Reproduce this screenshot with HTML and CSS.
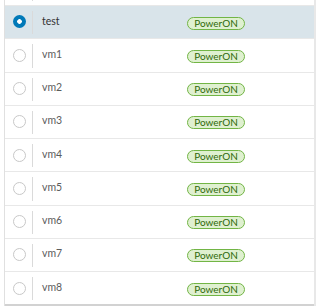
FILE: index.html
```html
<!DOCTYPE html>
<html lang="en">
  <head>
    <meta charset="UTF-8" />
    <meta name="viewport" content="width=device-width, initial-scale=1.0" />
    <title>VM list</title>
    <link rel="stylesheet" href="styles.css">
  </head>
  <body>
    <div class="grid">
      <div class="row row-prev">
        <div class="cell cell-select"></div>
        <div class="cell cell-name"></div>
        <div class="cell cell-status"></div>
      </div>
      <div class="row selected">
        <div class="cell cell-select"><span class="radio checked"></span></div>
        <div class="cell cell-name">test</div>
        <div class="cell cell-status"><span class="badge">PowerON</span></div>
      </div>
      <div class="row">
        <div class="cell cell-select"><span class="radio"></span></div>
        <div class="cell cell-name">vm1</div>
        <div class="cell cell-status"><span class="badge">PowerON</span></div>
      </div>
      <div class="row">
        <div class="cell cell-select"><span class="radio"></span></div>
        <div class="cell cell-name">vm2</div>
        <div class="cell cell-status"><span class="badge">PowerON</span></div>
      </div>
      <div class="row">
        <div class="cell cell-select"><span class="radio"></span></div>
        <div class="cell cell-name">vm3</div>
        <div class="cell cell-status"><span class="badge">PowerON</span></div>
      </div>
      <div class="row">
        <div class="cell cell-select"><span class="radio"></span></div>
        <div class="cell cell-name">vm4</div>
        <div class="cell cell-status"><span class="badge">PowerON</span></div>
      </div>
      <div class="row">
        <div class="cell cell-select"><span class="radio"></span></div>
        <div class="cell cell-name">vm5</div>
        <div class="cell cell-status"><span class="badge">PowerON</span></div>
      </div>
      <div class="row">
        <div class="cell cell-select"><span class="radio"></span></div>
        <div class="cell cell-name">vm6</div>
        <div class="cell cell-status"><span class="badge">PowerON</span></div>
      </div>
      <div class="row">
        <div class="cell cell-select"><span class="radio"></span></div>
        <div class="cell cell-name">vm7</div>
        <div class="cell cell-status"><span class="badge">PowerON</span></div>
      </div>
      <div class="row">
        <div class="cell cell-select"><span class="radio"></span></div>
        <div class="cell cell-name">vm8</div>
        <div class="cell cell-status"><span class="badge">PowerON</span></div>
      </div>
      <div class="grid-footer"></div>
    </div>
  </body>
</html>
```

FILE: styles.css
```css
body {
  margin: 0;
  padding: 0;
  background: #fff;
  font-family: "Lato", "Open Sans", sans-serif;
  color: #5c5c5c;
  height: 306px;
  overflow: hidden;
}
.grid {
  margin: -28.25px 4px 0 4px;
  border-left: 1px solid #e0e0e0;
  border-right: 2px solid #e8e8e8;
}
.row {
  display: flex;
  height: 32.25px;
  border-top: 1px solid #e8e8e8;
}
.row.selected {
  background: #d9e4ea;
  color: #333;
}
.cell {
  display: flex;
  align-items: center;
  padding-bottom: 3px;
  box-sizing: border-box;
}
.cell-select {
  width: 28px;
  justify-content: center;
  position: relative;
}
.cell-select::after {
  content: "";
  position: absolute;
  right: 0;
  top: 5px;
  bottom: 4px;
  width: 1px;
  background: #dadada;
}
.cell-name {
  width: 147px;
  padding-left: 9px;
  font-size: 10.5px;
}
.cell-status {
  flex: 1;
  padding-left: 7px;
}
.radio {
  display: block;
  width: 11px;
  height: 11px;
  border: 1px solid #c8c8c8;
  border-radius: 50%;
  background: #fff;
  margin: 3px 0 0 1px;
}
.radio.checked {
  width: 13px;
  height: 13px;
  border: none;
  margin-top: 2px;
  background: radial-gradient(circle, #fff 0 2px, #0079b8 2.6px);
}
.badge {
  display: inline-block;
  width: 58px;
  height: 13px;
  box-sizing: border-box;
  border: 1px solid #72b545;
  border-radius: 7px;
  background: #dff0d0;
  color: #2f6a0a;
  font-size: 10px;
  line-height: 11px;
  text-align: center;
  margin-top: 5px;
}
.grid-footer {
  height: 4px;
  border-top: 2px solid #d2d2d2;
}
```
